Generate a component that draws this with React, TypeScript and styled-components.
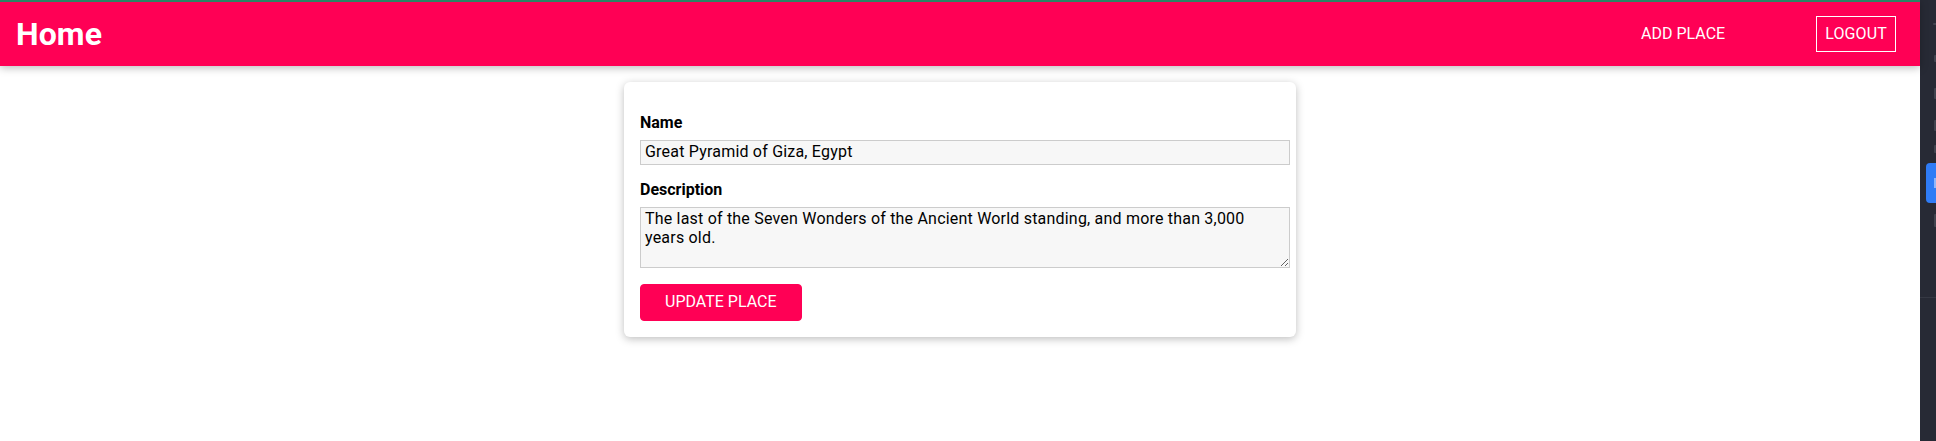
import React from "react";
import styled, { createGlobalStyle } from "styled-components";

const GlobalStyle = createGlobalStyle`
  html, body {
    margin: 0;
    padding: 0;
    height: 100%;
  }
  body {
    font-family: Roboto, "Liberation Sans", sans-serif;
    font-size: 16px;
    line-height: 1.15;
    color: #000;
    background: #fff;
    overflow: hidden;
  }
  #root {
    height: 100%;
  }
`;

const Shell = styled.div`
  display: flex;
  width: 1936px;
  height: 441px;
`;

const Main = styled.div`
  flex: 0 0 1920px;
  display: flex;
  flex-direction: column;
  background: #fff;
`;

const Header = styled.header`
  position: relative;
  z-index: 2;
  height: 64px;
  flex: 0 0 auto;
  border-top: 2px solid #2a8464;
  background: #ff0055;
  box-shadow: 0 2px 8px rgba(0, 0, 0, 0.26);
  display: flex;
  align-items: center;
  justify-content: space-between;
  padding: 0 24px 0 16px;
`;

const Title = styled.h1`
  margin: 0;
  font-size: 32px;
  font-weight: 700;
  line-height: 1;
  letter-spacing: 0.1px;
  color: #fff;
`;

const NavList = styled.ul`
  list-style: none;
  margin: 0;
  padding: 0;
  display: flex;
  align-items: center;
  gap: 82px;
`;

const NavItem = styled.li`
  margin: 0;
`;

const NavLink = styled.a<{ $outlined?: boolean }>`
  display: block;
  padding: 8px;
  border: 1px solid ${(p) => (p.$outlined ? "#fff" : "transparent")};
  background: transparent;
  color: #fff;
  font: inherit;
  letter-spacing: ${(p) => (p.$outlined ? "0.15px" : "0")};
  text-decoration: none;
  cursor: pointer;
`;

const Content = styled.main`
  display: flex;
  justify-content: center;
  padding-top: 16px;
`;

const Card = styled.form`
  width: 672px;
  box-sizing: border-box;
  padding: 16px;
  background: #fff;
  border-radius: 6px;
  box-shadow: 0 2px 8px rgba(0, 0, 0, 0.26);
`;

const Field = styled.div`
  margin: 16px 0;
`;

const Label = styled.label`
  display: block;
  font-weight: 700;
  margin-bottom: 8px;
`;

const TextInput = styled.input`
  display: block;
  width: 100%;
  box-sizing: content-box;
  margin: 0;
  font: inherit;
  line-height: 1.15;
  letter-spacing: 0.2px;
  color: #000;
  border: 1px solid #ccc;
  background: #f7f7f7;
  padding: 2px 4px;
  outline: none;
`;

const TextArea = styled.textarea`
  display: block;
  width: 100%;
  box-sizing: content-box;
  margin: 0;
  font: inherit;
  line-height: 1.15;
  letter-spacing: 0.2px;
  color: #000;
  border: 1px solid #ccc;
  background: #f7f7f7;
  padding: 2px 4px;
  outline: none;
`;

const Button = styled.button`
  font: inherit;
  line-height: 1.15;
  padding: 8px 24px;
  border: 1px solid #ff0055;
  border-radius: 4px;
  background: #ff0055;
  color: #fff;
  cursor: pointer;
`;

const SideStrip = styled.aside`
  flex: 0 0 16px;
  height: 441px;
  background: #272a35;
  display: flex;
  flex-direction: column;
  align-items: flex-end;
`;

const StripMark = styled.div<{ $top: number; $h: number; $w?: number }>`
  margin-top: ${(p) => p.$top}px;
  width: ${(p) => p.$w ?? 2}px;
  height: ${(p) => p.$h}px;
  background: #41444f;
  border-radius: 1px 0 0 1px;
`;

const StripActive = styled.div`
  margin-top: 10px;
  width: 10px;
  height: 40px;
  background: #2f7cf6;
  border-radius: 4px 0 0 4px;
  display: flex;
  align-items: center;
  justify-content: flex-end;
`;

const ActiveGlyph = styled.div`
  width: 2px;
  height: 10px;
  background: #8fb6fb;
`;

const StripDivider = styled.div`
  margin-top: 70px;
  width: 16px;
  height: 1px;
  background: #353843;
`;

export default function App() {
  return (
    <>
      <GlobalStyle />
      <Shell>
        <Main>
          <Header>
            <Title>Home</Title>
            <nav>
              <NavList>
                <NavItem>
                  <NavLink href="#add">ADD PLACE</NavLink>
                </NavItem>
                <NavItem>
                  <NavLink as="button" $outlined>
                    LOGOUT
                  </NavLink>
                </NavItem>
              </NavList>
            </nav>
          </Header>
          <Content>
            <Card onSubmit={(e) => e.preventDefault()}>
              <Field>
                <Label htmlFor="name">Name</Label>
                <TextInput
                  id="name"
                  type="text"
                  defaultValue="Great Pyramid of Giza, Egypt"
                />
              </Field>
              <Field>
                <Label htmlFor="description">Description</Label>
                <TextArea
                  id="description"
                  rows={3}
                  defaultValue="The last of the Seven Wonders of the Ancient World standing, and more than 3,000 years old."
                />
              </Field>
              <Button type="submit">UPDATE PLACE</Button>
            </Card>
          </Content>
        </Main>
        <SideStrip>
          <StripMark $top={23} $h={2} $w={3} />
          <StripMark $top={30} $h={7} />
          <StripMark $top={26} $h={11} />
          <StripMark $top={21} $h={11} />
          <StripMark $top={14} $h={8} />
          <StripActive>
            <ActiveGlyph />
          </StripActive>
          <StripMark $top={11} $h={13} />
          <StripDivider />
        </SideStrip>
      </Shell>
    </>
  );
}
